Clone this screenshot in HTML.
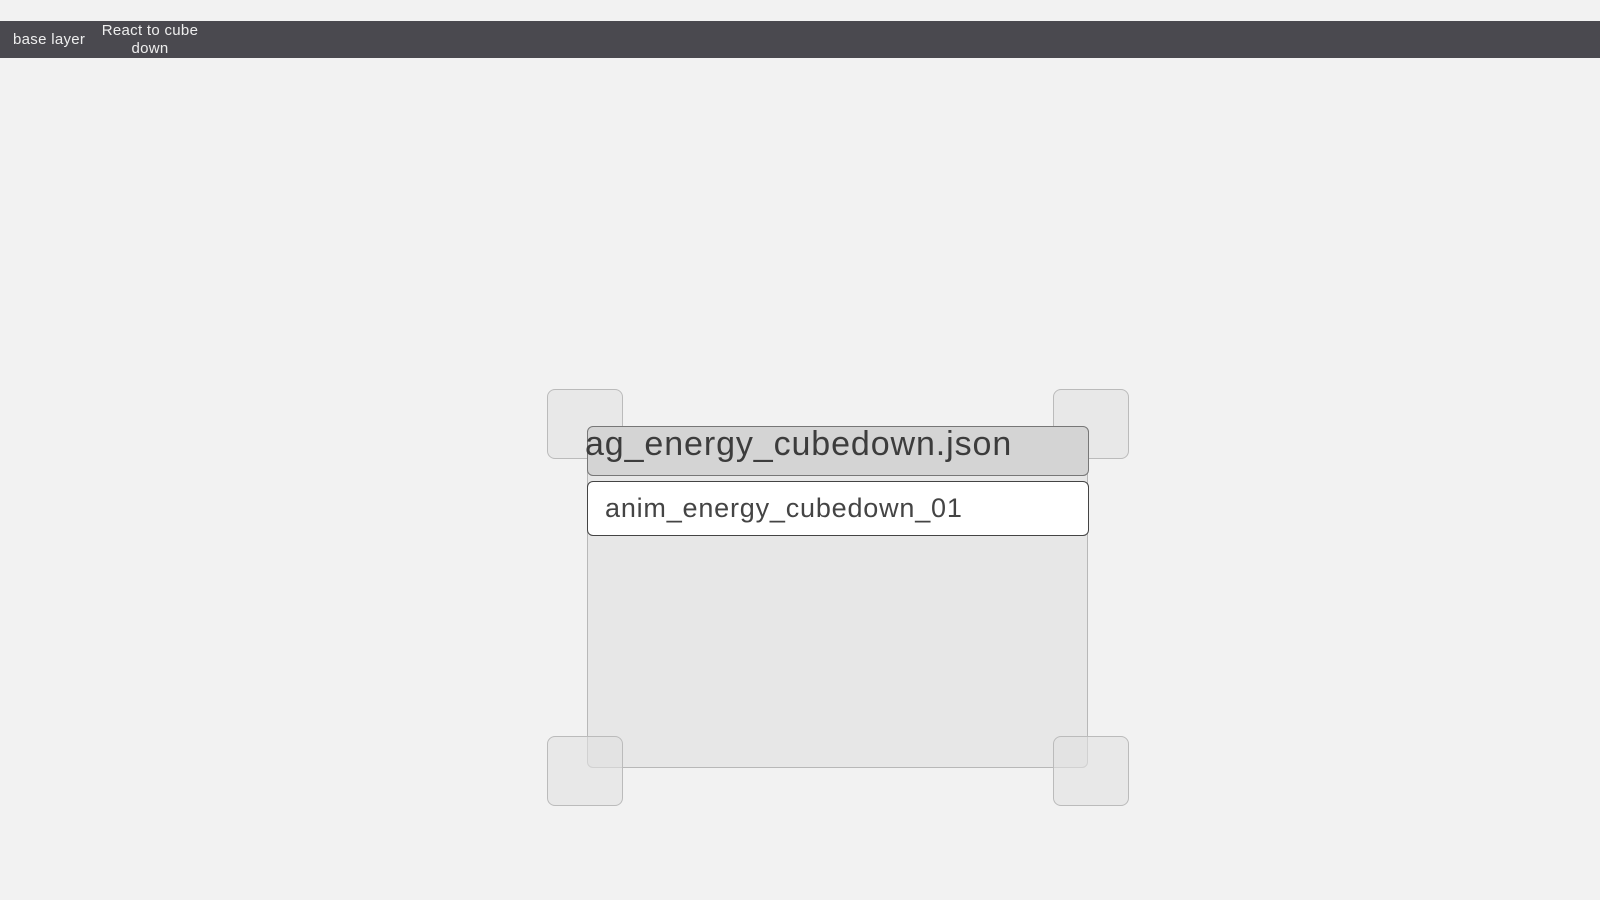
<!DOCTYPE html>
<html><head><style>
html,body{margin:0;padding:0;width:1600px;height:900px;background:#f2f2f2;overflow:hidden;font-family:"Liberation Sans",Arial,sans-serif;position:relative}
.bar{position:absolute;left:0;top:21px;width:1600px;height:37px;background:#4a494f;color:#eee;font-size:15px;letter-spacing:0.3px}
.t1{position:absolute;left:13px;top:10px}
.t2{position:absolute;left:96px;top:1px;width:108px;text-align:center;line-height:18px}
.panel{position:absolute;left:587px;top:427px;width:501px;height:341px;background:#e7e7e7;border:1px solid #b8b8b8;border-radius:6px;box-sizing:border-box}
.c{position:absolute;width:76px;height:70px;background:rgba(225,225,225,0.6);border:1px solid #bbb;border-radius:8px;box-sizing:border-box}
.title{position:absolute;left:587px;top:426px;width:502px;height:50px;background:#d4d4d4;border:1px solid #777;border-radius:6px;box-sizing:border-box}
.tt{position:absolute;left:585px;top:425px;font-size:34px;color:#3c3c3c;white-space:nowrap;letter-spacing:0.9px}
.inp{position:absolute;left:587px;top:481px;width:502px;height:55px;background:#fff;border:1px solid #444;border-radius:6px;box-sizing:border-box;font-size:27px;color:#444;padding:11px 0 0 17px;letter-spacing:0.8px}
</style></head><body>
<div class="bar"><span class="t1">base layer</span><span class="t2">React to cube down</span></div>
<div class="panel"></div>
<div class="c" style="left:547px;top:389px"></div>
<div class="c" style="left:1053px;top:389px"></div>
<div class="title"></div>
<div class="inp">anim_energy_cubedown_01</div>
<div class="c" style="left:547px;top:736px"></div>
<div class="c" style="left:1053px;top:736px"></div>
<div class="tt">ag_energy_cubedown.json</div>
</body></html>
